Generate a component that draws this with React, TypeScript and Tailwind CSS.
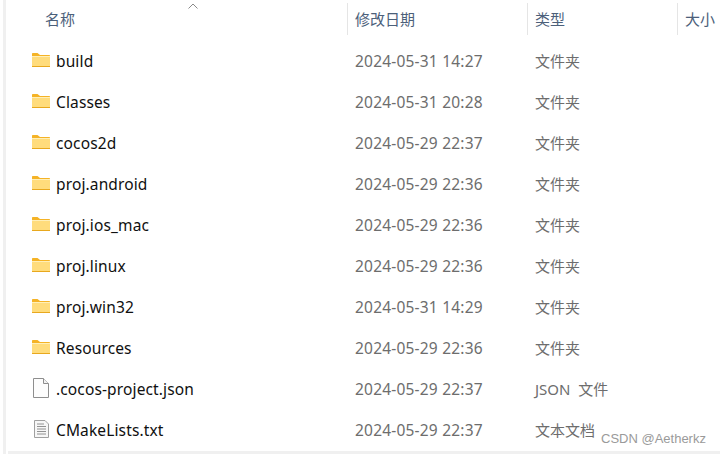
import React from "react"

const files = [
  { name: "build", date: "2024-05-31 14:27", type: "文件夹", icon: "folder" },
  { name: "Classes", date: "2024-05-31 20:28", type: "文件夹", icon: "folder" },
  { name: "cocos2d", date: "2024-05-29 22:37", type: "文件夹", icon: "folder" },
  { name: "proj.android", date: "2024-05-29 22:36", type: "文件夹", icon: "folder" },
  { name: "proj.ios_mac", date: "2024-05-29 22:36", type: "文件夹", icon: "folder" },
  { name: "proj.linux", date: "2024-05-29 22:36", type: "文件夹", icon: "folder" },
  { name: "proj.win32", date: "2024-05-31 14:29", type: "文件夹", icon: "folder" },
  { name: "Resources", date: "2024-05-29 22:36", type: "文件夹", icon: "folder" },
  { name: ".cocos-project.json", date: "2024-05-29 22:37", type: "JSON 文件", icon: "file" },
  { name: "CMakeLists.txt", date: "2024-05-29 22:37", type: "文本文档", icon: "text" },
]

function FolderIcon() {
  return (
    <svg width="18" height="14" viewBox="0 0 18 14">
      <path d="M0 1C0 .4.4 0 1 0h4.500L8 2h9c.6 0 1 .4 1 1v2H0z" fill="#f5b326" />
      <rect x="0" y="3" width="18" height="11" fill="#e8a81e" />
      <rect x="0" y="3" width="18" height="1" fill="#ffefb8" />
      <rect x="0" y="4" width="18" height="9" fill="#ffdc7c" />
    </svg>
  )
}

function FileIcon() {
  return (
    <svg width="16" height="20" viewBox="0 0 16 20" fill="none">
      <path d="M.5.5h10l5 5v14H.5z" fill="#fdfdfd" stroke="#8e8e8e" />
      <path d="M10.5.5v5h5" stroke="#8e8e8e" fill="#f2f2f2" />
    </svg>
  )
}

function TextFileIcon() {
  return (
    <svg width="15" height="18" viewBox="0 0 15 18" fill="none">
      <path d="M.5.5h10.500l3.500 3.500v13.500H.5z" fill="#f7f7f7" stroke="#a0a0a0" />
      <path d="M3 4h7M3 6.500h9M3 9h9M3 11.500h9M3 14h9" stroke="#929292" />
    </svg>
  )
}

function RowIcon({ kind }: { kind: string }) {
  if (kind === "folder") return <FolderIcon />
  if (kind === "file") return <FileIcon />
  return <TextFileIcon />
}

const font = "font-['Noto_Sans','Noto_Sans_CJK_SC',sans-serif]"

export default function App() {
  return (
    <div className={`relative flex h-[454px] w-[720px] overflow-hidden bg-white ${font}`}>
      <div className="ml-[3px] h-full w-[3px] shrink-0 bg-[#f0f0f0]" />

      <div className="flex min-w-0 flex-1 flex-col">
        <div className="grid h-[41px] grid-cols-[341px_180px_150px_1fr] pt-[3px] text-[15px] text-[#4c607a]">
          <div className="h-[32px] pl-[39px] leading-[32px]">名称</div>
          <div className="h-[32px] border-l border-[#e5e5e5] pl-[7px] leading-[32px]">修改日期</div>
          <div className="h-[32px] border-l border-[#e5e5e5] pl-[7px] leading-[32px]">类型</div>
          <div className="h-[32px] border-l border-[#e5e5e5] pl-[7px] leading-[32px]">大小</div>
        </div>

        <div className="flex-1">
          {files.map((file) => (
            <div key={file.name} className="grid h-[41px] grid-cols-[341px_180px_150px_1fr] items-center">
              <div className="flex items-center pl-[26px] text-[15.5px] tracking-[0.13px] text-[#101010]">
                <div className="mr-[6px] flex w-[18px] shrink-0 justify-center pb-[4px]">
                  <RowIcon kind={file.icon} />
                </div>
                <span>{file.name}</span>
              </div>
              <div className="pl-[8px] text-[15.5px] tracking-[0.2px] text-[#6d6d6d]">{file.date}</div>
              <div className="-mt-[1px] pl-[8px] text-[15px] text-[#6d6d6d] [word-spacing:4px]">{file.type}</div>
              <div />
            </div>
          ))}
        </div>

        <div className="ml-[2px] h-[3px] shrink-0 bg-[#f0f0f0]" />
      </div>

      <svg className="absolute left-[188px] top-[3px]" width="10" height="6" viewBox="0 0 10 6" fill="none">
        <path d="M.5 5.500 5 1l4.500 4.500" stroke="#8a8a8a" />
      </svg>

      <div className="absolute left-[601px] top-[429px] font-['Liberation_Sans',sans-serif] text-[13px] text-[#9a9a9a]">
        CSDN @Aetherkz
      </div>
    </div>
  )
}
